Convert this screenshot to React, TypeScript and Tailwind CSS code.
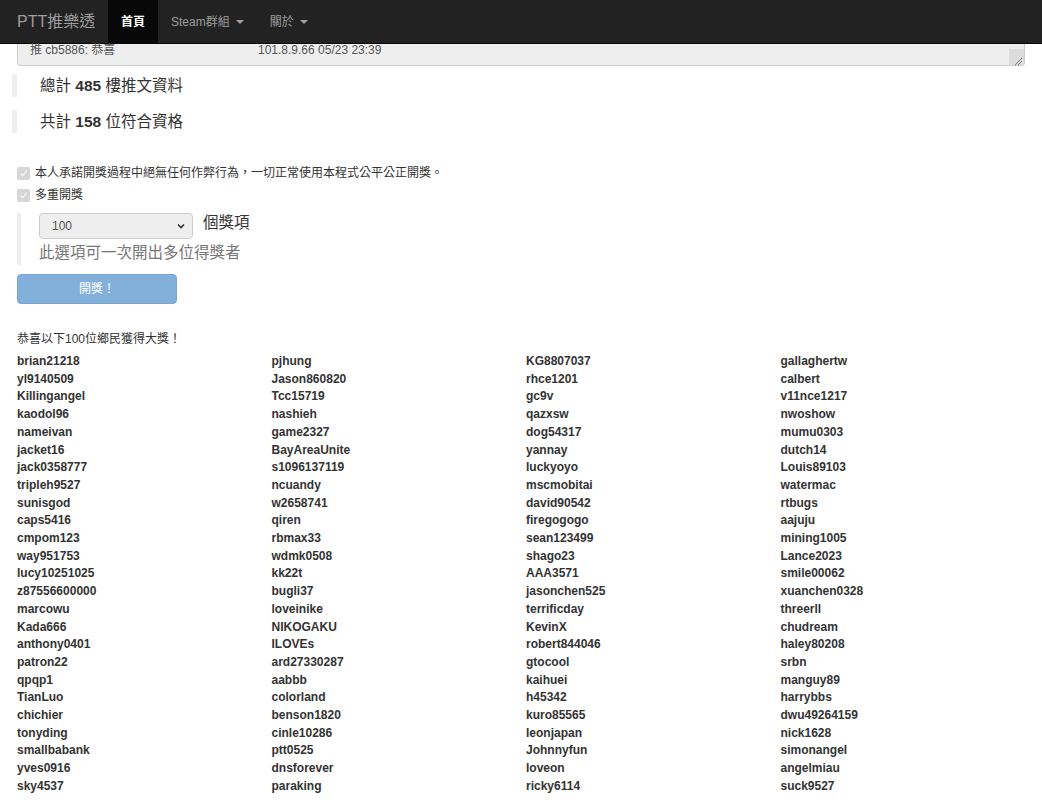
const cols: string[][] = [
  ["brian21218","yl9140509","Killingangel","kaodol96","nameivan","jacket16","jack0358777","tripleh9527","sunisgod","caps5416","cmpom123","way951753","lucy10251025","z87556600000","marcowu","Kada666","anthony0401","patron22","qpqp1","TianLuo","chichier","tonyding","smallbabank","yves0916","sky4537"],
  ["pjhung","Jason860820","Tcc15719","nashieh","game2327","BayAreaUnite","s1096137119","ncuandy","w2658741","qiren","rbmax33","wdmk0508","kk22t","bugli37","loveinike","NIKOGAKU","ILOVEs","ard27330287","aabbb","colorland","benson1820","cinle10286","ptt0525","dnsforever","paraking"],
  ["KG8807037","rhce1201","gc9v","qazxsw","dog54317","yannay","luckyoyo","mscmobitai","david90542","firegogogo","sean123499","shago23","AAA3571","jasonchen525","terrificday","KevinX","robert844046","gtocool","kaihuei","h45342","kuro85565","leonjapan","Johnnyfun","loveon","ricky6114"],
  ["gallaghertw","calbert","v11nce1217","nwoshow","mumu0303","dutch14","Louis89103","watermac","rtbugs","aajuju","mining1005","Lance2023","smile00062","xuanchen0328","threerll","chudream","haley80208","srbn","manguy89","harrybbs","dwu49264159","nick1628","simonangel","angelmiau","suck9527"],
];

function Caret() {
  return <span className="inline-block ml-[6px] w-0 h-0 border-t-[4px] border-t-[#9d9d9d] border-x-[4px] border-x-transparent" />;
}

function Check() {
  return (
    <span className="w-[13px] h-[13px] rounded-[2px] bg-[#d6d6d6] flex items-center justify-center shrink-0">
      <svg width="9" height="9" viewBox="0 0 9 9">
        <path d="M1.5 4.8 L3.6 6.8 L7.6 2" fill="none" stroke="#f2f2f2" strokeWidth="1.4" />
      </svg>
    </span>
  );
}

export default function App() {
  return (
    <div className="w-[1042px] h-[800px] overflow-hidden bg-white text-[#333] text-[12px] [font-family:'Liberation_Sans','Noto_Sans_CJK_TC',sans-serif]">
      <nav className="h-[44px] bg-[#222] border-b border-[#080808] flex items-stretch pl-[17px]">
        <div className="w-[91px] flex items-center text-[16px] text-[#9d9d9d] whitespace-nowrap">PTT推樂透</div>
        <div className="flex items-center px-[13px] bg-[#080808] text-white font-bold text-[12px]">首頁</div>
        <div className="flex items-center px-[13px] text-[#9d9d9d] text-[12px]">Steam群組<Caret /></div>
        <div className="flex items-center px-[13px] text-[#9d9d9d] text-[12px]">關於<Caret /></div>
      </nav>

      <div className="relative mx-[17px] h-[22px] bg-[#eee] border-x border-b border-[#ccc] rounded-b-[4px] flex text-[#555] text-[12px] leading-[12px] pl-[12px]">
        <span className="w-[228px]">推 cb5886: 恭喜</span>
        <span>101.8.9.66 05/23 23:39</span>
        <div className="absolute right-0 bottom-0 w-[15px] h-[16px] bg-[#dcdcdc] rounded-br-[3px]">
          <svg width="15" height="16" viewBox="0 0 15 16">
            <path d="M13 9 L6 16 M13 12 L9 16" stroke="#7a7a7a" strokeWidth="1" />
          </svg>
        </div>
      </div>

      <div className="mt-[8px] ml-[12px] border-l-[5px] border-[#eee] h-[23px] pl-[23px] flex items-center text-[15.5px]">
        總計&nbsp;<b>485</b>&nbsp;樓推文資料
      </div>
      <div className="mt-[13px] ml-[12px] border-l-[5px] border-[#eee] h-[23px] pl-[23px] flex items-center text-[15.5px]">
        共計&nbsp;<b>158</b>&nbsp;位符合資格
      </div>

      <div className="mt-[31px] ml-[17px] h-[18px] flex items-center gap-[5px]">
        <Check />
        <span>本人承諾開獎過程中絕無任何作弊行為，一切正常使用本程式公平公正開獎。</span>
      </div>
      <div className="mt-[4px] ml-[17px] h-[18px] flex items-center gap-[5px]">
        <Check />
        <span>多重開獎</span>
      </div>

      <div className="mt-[9px] ml-[17px] border-l-[4px] border-[#eee] h-[52px] pl-[18px]">
        <div className="flex items-start">
          <div className="w-[154px] h-[26px] bg-[#eee] border border-[#ccc] rounded-[4px] flex items-center justify-between pl-[12px] pr-[6px] text-[12px] text-[#555]">
            <span>100</span>
            <svg width="10" height="10" viewBox="0 0 10 10">
              <path d="M2 3.5 L5 6.5 L8 3.5" fill="none" stroke="#333" strokeWidth="1.6" />
            </svg>
          </div>
          <span className="ml-[10px] text-[15.5px] leading-[20px]">個獎項</span>
        </div>
        <div className="mt-[5px] text-[15.5px] leading-[18px] text-[#777]">此選項可一次開出多位得獎者</div>
      </div>

      <div className="mt-[9px] ml-[17px] w-[160px] h-[30px] rounded-[4px] bg-[#83b0db] border border-[#79a7d4] text-white text-[12px] flex items-center justify-center">
        開獎！
      </div>

      <div className="mt-[27px] ml-[17px] leading-[17px]">恭喜以下100位鄉民獲得大獎！</div>

      <div className="mt-[5px] ml-[17px] w-[1018px] grid grid-cols-4 font-bold leading-[17.7px]">
        {cols.map((c, i) => (
          <div key={i}>
            {c.map((n) => (
              <div key={n}>{n}</div>
            ))}
          </div>
        ))}
      </div>
    </div>
  );
}
